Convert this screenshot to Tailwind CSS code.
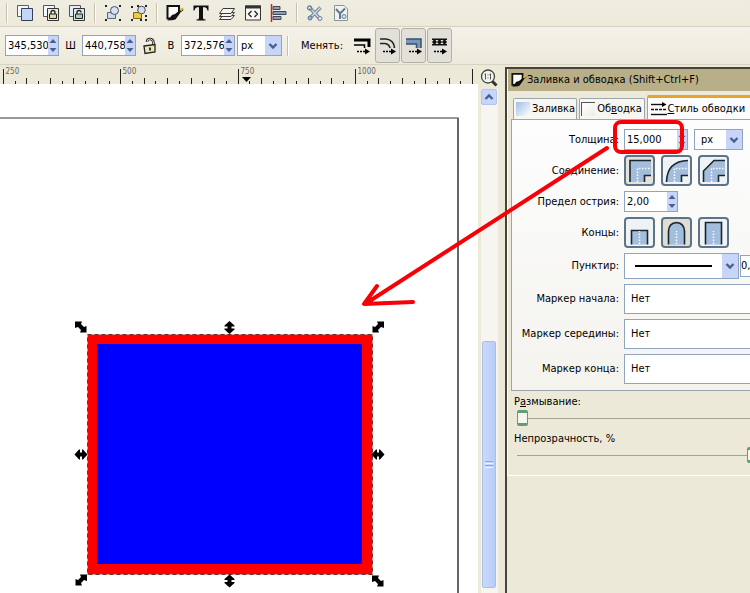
<!DOCTYPE html>
<html lang="ru">
<head>
<meta charset="utf-8">
<title>Заливка и обводка</title>
<script src="https://cdn.jsdelivr.net/npm/@tailwindcss/browser@4"></script>
</head>
<body class="relative flex h-screen flex-col overflow-hidden bg-[#ece9d8] font-['DejaVu_Sans_Condensed','DejaVu_Sans',sans-serif] text-[11px] leading-4 text-black">

<svg class="hidden">
  <symbol id="chev" viewBox="0 0 10 8"><path d="M1.5 2 5 5.5 8.5 2" fill="none" stroke="#46608f" stroke-width="2.4"/></symbol>
  <symbol id="up" viewBox="0 0 8 6"><path d="M0.5 5 4 1 7.5 5Z" fill="#46608f"/></symbol>
  <symbol id="down" viewBox="0 0 8 6"><path d="M0.5 1 4 5 7.5 1Z" fill="#46608f"/></symbol>
  <symbol id="pen" viewBox="0 0 18 18"><path d="M1.500 2H13V9L9 14.500H1.500Z" fill="#fbfaf6" stroke="#111" stroke-width="2"/><path d="M1.500 16.500 6 11 9 10 16.500 4 17.500 6 10 12 8 16Z" fill="#111"/><path d="M13.500 5.500 16 3.500 17.500 5 15 7.500Z" fill="#d9b63c"/></symbol>
</svg>

<header>
  <div class="flex h-[27px] items-center gap-2 border-b border-[#d5d1bf] bg-linear-to-b from-[#efede0] to-[#edeadb] pl-1.5">
    <div class="h-5 w-0.5 border-l border-[#c5c2ac] bg-white"></div>
    <button aria-label="Дублировать" class="size-[18px]"><svg viewBox="0 0 18 18"><path d="M1.500 1.500h11v11h-11z" fill="#f4f7fc" stroke="#555f72"/><path d="M5.500 4.500h11v12h-11z" fill="#c2d6f5" stroke="#34405a"/></svg></button>
    <button aria-label="Создать клон" class="size-[18px]"><svg viewBox="0 0 18 18"><path d="M1.500 1.500h11v11h-11z" fill="#f4f7fc" stroke="#555"/><path d="M5.500 4.500h11v12h-11z" fill="#eceade" stroke="#333"/><path d="M7.500 10h7v4.500h-7z" fill="#e9d79a" stroke="#222"/><path d="M9 10V8.500a2 2 0 0 1 4 0V10" fill="none" stroke="#222" stroke-width="1.300"/></svg></button>
    <button aria-label="Отсоединить клон" class="size-[18px]"><svg viewBox="0 0 18 18"><path d="M1.500 1.500h11v11h-11z" fill="#e2ecfb" stroke="#555"/><path d="M5.500 4.500h11v12h-11z" fill="#dce6ee" stroke="#333"/><path d="M7.500 10h7v4.500h-7z" fill="#a9cfb0" stroke="#222"/><path d="M9 10V8.500a2 2 0 0 1 4 0" fill="none" stroke="#222" stroke-width="1.300"/></svg></button>
    <div class="h-5 w-0.5 border-l border-[#c5c2ac] bg-white"></div>
    <button aria-label="Сгруппировать" class="size-[18px]"><svg viewBox="0 0 18 18"><path d="M1 1h2v2H1zM15 1h2v2h-2zM1 15h2v2H1zM15 15h2v2h-2z" fill="#222"/><path d="M3.500 8.500h8v6h-8z" fill="#c9daf2" stroke="#5b6472"/><circle cx="10.500" cy="6.500" r="4" fill="#d4e2f6" stroke="#46506a"/></svg></button>
    <button aria-label="Разгруппировать" class="size-[18px]"><svg viewBox="0 0 18 18"><path d="M1 2h2v2H1zM7 1h2v2H7zM15 1h2v2h-2zM1 15h2v2H1zM10 15h2v2h-2zM15 11h2v2h-2zM15 15h2v2h-2z" fill="#222"/><path d="M3.500 8.500h8v6h-8z" fill="#f0c846" stroke="#7d6418"/><circle cx="11.500" cy="6" r="3.800" fill="#d8dfe2" stroke="#46506a"/></svg></button>
    <div class="h-5 w-0.5 border-l border-[#c5c2ac] bg-white"></div>
    <button aria-label="Заливка и обводка" class="size-[18px]"><svg class="size-full"><use href="#pen"/></svg></button>
    <button aria-label="Текст и шрифт" class="size-[18px]"><svg viewBox="0 0 18 18"><path d="M1.500 1.500h15V6.500H15.500Q15 3.500 13 3.300H11V14Q11 15.500 13.500 15.500V16.500H4.500V15.500Q7 15.500 7 14V3.300H5Q3 3.500 2.500 6.500H1.500Z" fill="#111"/></svg></button>
    <button aria-label="Слои" class="size-[18px]"><svg viewBox="0 0 18 18"><g fill="#f6f5ef" stroke="#3c3c3c"><path d="M1.500 15.500 5 11.500H16.500L13 15.500Z"/><path d="M1.500 12.500 5 8.500H16.500L13 12.500Z"/><path d="M1.500 9.500 5 4.500H16.500L13 9.500Z"/></g></svg></button>
    <button aria-label="Редактор XML" class="size-[18px]"><svg viewBox="0 0 18 18"><path d="M1.500 2h15v14h-15z" fill="#f8f7f2" stroke="#333"/><path d="M1 1.500h16v3H1z" fill="#333"/><path d="M7.500 7 4.500 10 7.500 13M10.500 7l3 3-3 3" fill="none" stroke="#222" stroke-width="1.300"/></svg></button>
    <button aria-label="Выровнять" class="size-[18px]"><svg viewBox="0 0 18 18"><path d="M1.500 0v18" stroke="#e01818" stroke-width="1.500"/><g fill="#8b9db0" stroke="#3c4a5c"><path d="M3 2.500h7v3H3zM3 7.500h13v3H3zM3 12.500h8v3H3z"/></g></svg></button>
    <div class="h-5 w-0.5 border-l border-[#c5c2ac] bg-white"></div>
    <button aria-label="Настройки" class="size-[18px]"><svg viewBox="0 0 18 18"><path d="M4 4 14 15M14.500 3.500 4 14" stroke="#6f8299" stroke-width="3.400"/><path d="M4 4 14 15M14.500 3.500 4 14" stroke="#cfdbea" stroke-width="1.400"/><circle cx="3.500" cy="4" r="2" fill="none" stroke="#6f8299" stroke-width="1.300"/><circle cx="14" cy="14.500" r="2" fill="#dde5ec" stroke="#6f8299"/><circle cx="4" cy="14" r="2" fill="#a0b8d8" stroke="#5c7396"/></svg></button>
    <button aria-label="Свойства документа" class="size-[18px]"><svg viewBox="0 0 18 18"><path d="M2.500 1.500H12L15.500 5V16.500H2.500Z" fill="#f2f3f0" stroke="#8a9396"/><path d="M4 5 8 9.500 13 4.500M8 9v6" stroke="#60788e" stroke-width="2" fill="none"/><circle cx="12" cy="12.500" r="2" fill="#dfe7ea" stroke="#60788e"/></svg></button>
  </div>

  <div class="flex h-[38px] items-center border-b border-[#d8d4c4] bg-linear-to-b from-[#f4f2e9] to-[#edeadb] pl-[5px]">
    <div class="flex h-[21px] w-[54px] border border-[#8fa5bf] bg-white">
      <input aria-label="Y" value="345,530" class="w-0 flex-1 pl-0.5 outline-none">
      <div class="flex w-[10px] flex-col bg-[#c6d5f8]"><button aria-label="Больше" class="flex flex-1 items-center justify-center"><svg class="h-[6px] w-2"><use href="#up"/></svg></button><button aria-label="Меньше" class="flex flex-1 items-center justify-center"><svg class="h-[6px] w-2"><use href="#down"/></svg></button></div>
    </div>
    <label for="w" class="w-[23px] text-center">Ш</label>
    <div class="flex h-[21px] w-[54px] border border-[#8fa5bf] bg-white">
      <input id="w" value="440,758" class="w-0 flex-1 pl-0.5 outline-none">
      <div class="flex w-[10px] flex-col bg-[#c6d5f8]"><button aria-label="Больше" class="flex flex-1 items-center justify-center"><svg class="h-[6px] w-2"><use href="#up"/></svg></button><button aria-label="Меньше" class="flex flex-1 items-center justify-center"><svg class="h-[6px] w-2"><use href="#down"/></svg></button></div>
    </div>
    <button aria-label="Сохранять пропорции" class="ml-1.5 h-[18px] w-[15px]"><svg viewBox="0 0 15 18"><path d="M5 5Q5 1.500 8.500 2 11.500 2.500 11.500 6V8" fill="none" stroke="#222" stroke-width="2.600"/><path d="M5 5Q5 1.500 8.500 2 11.500 2.500 11.500 6V8" fill="none" stroke="#ddd8c0"/><path d="M2 9 13 7.500V15L3 16.500Z" fill="#efe6b4" stroke="#222" stroke-width="1.300"/><path d="M8 10.500V13.500" stroke="#222" stroke-width="1.800"/></svg></button>
    <label for="h" class="w-6 pl-1 text-center">В</label>
    <div class="flex h-[21px] w-[54px] border border-[#8fa5bf] bg-white">
      <input id="h" value="372,576" class="w-0 flex-1 pl-0.5 outline-none">
      <div class="flex w-[10px] flex-col bg-[#c6d5f8]"><button aria-label="Больше" class="flex flex-1 items-center justify-center"><svg class="h-[6px] w-2"><use href="#up"/></svg></button><button aria-label="Меньше" class="flex flex-1 items-center justify-center"><svg class="h-[6px] w-2"><use href="#down"/></svg></button></div>
    </div>
    <div class="relative ml-0.5 h-[21px] w-[45px]">
      <select aria-label="Единицы" class="size-full appearance-none border border-[#8fa5bf] bg-white pl-[3px] outline-none"><option>px</option></select>
      <div class="pointer-events-none absolute inset-y-px right-px flex w-4 items-center justify-center bg-[#c6d5f8]"><svg class="h-2 w-[10px]"><use href="#chev"/></svg></div>
    </div>
    <div class="ml-[5px] h-5 w-0.5 border-l border-[#c5c2ac] bg-white"></div>
    <span class="ml-3 w-[42px] whitespace-nowrap">Менять:</span>
    <button aria-label="Толщина обводки" class="ml-2.5 h-[18px] w-[20px]"><svg viewBox="0 0 20 18"><path d="M1 3H16V10" fill="none" stroke="#000" stroke-width="3"/><path d="M1 8H11.500V11" fill="none" stroke="#000" stroke-width="1.500"/><path d="M4 14.500h9" stroke="#000" stroke-width="1.500" stroke-dasharray="2 1"/><path d="M12 11.500 17 14.500 12 17.500Z"/></svg></button>
    <div class="ml-[2px] flex gap-px">
      <button aria-pressed="true" aria-label="Радиус углов" class="flex h-[35px] w-[25px] items-center justify-center rounded-[3px] border border-[#b3b0a4] bg-[#e2e0d8]"><svg class="h-[18px] w-5" viewBox="0 0 20 18"><path d="M2 2H8Q16 3 16.500 11" fill="none" stroke="#222" stroke-width="1.600"/><path d="M2 6.500H7Q11 7 12 11" fill="none" stroke="#222" stroke-width="1.600"/><path d="M5 14.500h9" stroke="#000" stroke-width="1.500" stroke-dasharray="2 1"/><path d="M13 11.500 18 14.500 13 17.500Z"/></svg></button>
      <button aria-pressed="true" aria-label="Градиенты" class="flex h-[35px] w-[25px] items-center justify-center rounded-[3px] border border-[#b3b0a4] bg-[#e2e0d8]"><svg class="h-[18px] w-5" viewBox="0 0 20 18"><path d="M2 2H17V11H13V7H2Z" fill="#7896b5"/><path d="M2 2H17V11M2 7H12.500V11" fill="none" stroke="#39516b" stroke-width="1.500"/><path d="M5 14.500h9" stroke="#000" stroke-width="1.500" stroke-dasharray="2 1"/><path d="M13 11.500 18 14.500 13 17.500Z"/></svg></button>
      <button aria-pressed="true" aria-label="Текстуры" class="flex h-[35px] w-[25px] items-center justify-center rounded-[3px] border border-[#b3b0a4] bg-[#e2e0d8]"><svg class="h-[18px] w-5" viewBox="0 0 20 18"><path d="M2 1.500H17V3H2ZM2 7H17V8.500H2Z" fill="#111"/><path d="M4.500 2 7 5 4.500 8 2 5ZM9.500 2 12 5 9.500 8 7 5ZM14.500 2 17 5 14.500 8 12 5Z" fill="#111"/><path d="M4 14.500h9" stroke="#000" stroke-width="1.500" stroke-dasharray="2 1"/><path d="M12 11.500 17 14.500 12 17.500Z"/></svg></button>
    </div>
  </div>
</header>

<main class="flex min-h-0 flex-1">
  <section class="flex min-w-0 flex-1 flex-col">
    <svg class="h-[19px] w-full shrink-0 bg-[#ece9d8]" id="ruler" font-size="8" fill="#666"></svg>
    <svg class="w-full flex-1 bg-white">
      <path d="M0 34H457" stroke="#999" stroke-width="2"/>
      <path d="M458 33.500V700" stroke="#666" stroke-width="2"/>
      <rect x="92" y="255" width="275" height="230" fill="#00f" stroke="#f00" stroke-width="10"/>
      <rect x="87.500" y="250.500" width="285" height="240" fill="none" stroke="#f99" />
      <rect x="87.500" y="250.500" width="285" height="240" fill="none" stroke="#633" stroke-dasharray="4 3"/>
      <defs>
        <path id="v" d="M0-6.500 5-2V-1H2V1H5V2L0 6.500-5 2V1H-2V-1H-5V-2Z"/>
        <path id="d" d="M-6-5.500H1L0-3 3 0 5.500-1V5.500H-1L0 3-3 0-6 1Z"/>
      </defs>
      <use href="#d" x="81" y="243"/><use href="#d" x="378" y="497"/>
      <use href="#d" transform="translate(378 243) scale(-1 1)"/><use href="#d" transform="translate(81 496) scale(-1 1)"/>
      <use href="#v" x="229.500" y="243.500"/><use href="#v" x="229.500" y="497"/>
      <use href="#v" transform="translate(81 370.500) rotate(90)"/><use href="#v" transform="translate(378 370.500) rotate(90)"/>
    </svg>
  </section>

  <div class="flex w-[27px] flex-col items-center pr-[7px] pl-0.5">
    <button aria-label="Масштаб 1:1" class="mt-1 size-[18px] shrink-0"><svg viewBox="0 0 18 18"><path d="M12 12 16.500 16.500" stroke="#333" stroke-width="3"/><circle cx="8" cy="7.500" r="6.500" fill="#f3f3ee" stroke="#444" stroke-width="1.300"/><path d="M5.500 4.500v6M10.500 4.500v6M4.500 5.500h1M9.500 5.500h1M8 5.500v1M8 8.500v1" stroke="#555"/></svg></button>
    <div class="mt-0.5 flex w-[17px] flex-1 flex-col items-center bg-[#f6f5ef]">
      <button aria-label="Вверх" class="flex size-4 items-center justify-center rounded-xs border border-[#b3c5ee] bg-[#c6d5fb]"><svg class="h-2 w-[10px] rotate-180"><use href="#chev"/></svg></button>
      <div class="flex-[237]"></div>
      <div class="flex w-[14px] flex-[246] flex-col items-center justify-center gap-px rounded-xs border border-[#a9bfe8] bg-linear-to-r from-[#cbdafc] to-[#b9ccf8]">
        <i class="h-px w-2 bg-[#93aae0]"></i><i class="h-px w-2 bg-[#eef3ff]"></i><i class="h-px w-2 bg-[#93aae0]"></i><i class="h-px w-2 bg-[#eef3ff]"></i>
      </div>
      <div class="h-[5px]"></div>
    </div>
  </div>

  <aside class="mt-0.5 w-[245px] shrink-0 overflow-hidden border-t-2 border-l-2 border-[#45433a]">
   <div class="w-[251px]">
    <div class="border-b border-l border-white pb-[12px]">
      <h1 class="flex h-[22px] items-center bg-[#b8af89] pl-[3px] whitespace-nowrap"><svg class="size-4"><use href="#pen"/></svg>Заливка и обводка (Shift+Ctrl+F)</h1>
      <div role="tablist" class="flex items-end gap-0.5 pt-1 pl-[5px]">
        <button role="tab" class="flex h-[21px] w-[65px] items-center gap-0.5 rounded-t-xs border border-b-0 border-[#9ba5ab] bg-[#f7f6f0] pl-0.5"><i class="size-[14px] shrink-0 bg-linear-to-br from-[#9fbfe6] to-white"></i>Заливка</button>
        <button role="tab" class="flex h-[21px] w-[67px] items-center gap-0.5 rounded-t-xs border border-b-0 border-[#9ba5ab] bg-[#f7f6f0] pl-px"><i class="size-[14px] shrink-0 border-t border-l border-[#555] bg-linear-to-br from-white to-[#eeece4]"></i><span>Об<u>в</u>одка</span></button>
        <button role="tab" aria-selected="true" class="flex h-[24px] w-[112px] items-center rounded-t-xs border-t-3 border-l border-[#e5a52d] border-l-[#9ba5ab] bg-[#fcfcfe] pl-[3px] whitespace-nowrap"><svg class="size-4 shrink-0" viewBox="0 0 16 16"><path d="M0 3.500H11" stroke="#111" stroke-width="1.400"/><path d="M11 1 15.500 3.500 11 6Z"/><path d="M0 8.500H16" stroke="#111" stroke-dasharray="3 1" stroke-width="1.400"/><path d="M0 13.500H16" stroke="#111" stroke-width="1.400"/></svg><span><u>С</u>тиль обводки</span></button>
      </div>
      <div class="ml-[3px] grid grid-cols-[107px_auto] items-center gap-x-[5px] gap-y-[5px] border border-[#9ba5ab] bg-linear-to-b from-[#fdfdfe] to-[#f4f3ee] pt-[9px] pb-1.5 whitespace-nowrap">
        <label for="thick" class="text-right">Толщина:</label>
        <div class="flex">
          <div class="flex h-[21px] w-[64px] border border-[#8fa5bf] bg-white"><input id="thick" value="15,000" class="w-0 flex-1 pl-0.5 outline-none"><div class="flex w-[10px] flex-col bg-[#c6d5f8]"><button aria-label="Больше" class="flex flex-1 items-center justify-center"><svg class="h-[6px] w-2"><use href="#up"/></svg></button><button aria-label="Меньше" class="flex flex-1 items-center justify-center"><svg class="h-[6px] w-2"><use href="#down"/></svg></button></div></div>
          <div class="relative ml-1.5 h-[21px] w-[49px]"><select aria-label="Единицы толщины" class="size-full appearance-none border border-[#8fa5bf] bg-white pl-[6px] outline-none"><option>px</option></select><div class="pointer-events-none absolute inset-y-px right-px flex w-4 items-center justify-center bg-[#c6d5f8]"><svg class="h-2 w-[10px]"><use href="#chev"/></svg></div></div>
        </div>
        <span class="text-right">Соединение:</span>
        <div class="flex gap-1.5">
          <button aria-label="Острое" aria-pressed="true" class="size-[31px] rounded-[4px] border-2 border-[#5d7488] bg-[#e4e2da]"><svg class="size-full" viewBox="0 0 27 27"><path d="M4 3.500H25V18H18.500V25H4Z" fill="#a3bddd"/><path d="M4 25V3.500H25M18.500 25V18.500H25" fill="none" stroke="#1a2630" stroke-width="1.600"/><path d="M11.500 25V11.500H25" fill="none" stroke="#fff" stroke-width="1.500" stroke-dasharray="1.500 1.500"/></svg></button>
          <button aria-label="Скруглённое" class="size-[31px] rounded-[4px] border-2 border-[#5d7488] bg-[#eff3f5]"><svg class="size-full" viewBox="0 0 27 27"><path d="M3.500 25Q4 4 25 3.500V18H18.500V25Z" fill="#a3bddd"/><path d="M3.500 25Q4 4 25 3.500M18.500 25V18.500H25" fill="none" stroke="#1a2630" stroke-width="1.600"/><path d="M11.500 25V11.500H25" fill="none" stroke="#fff" stroke-width="1.500" stroke-dasharray="1.500 1.500"/></svg></button>
          <button aria-label="Фаска" class="size-[31px] rounded-[4px] border-2 border-[#5d7488] bg-[#eff3f5]"><svg class="size-full" viewBox="0 0 27 27"><path d="M3.500 25V14L14 3.500H25V18H18.500V25Z" fill="#a3bddd"/><path d="M3.500 25V14L14 3.500H25M18.500 25V18.500H25" fill="none" stroke="#1a2630" stroke-width="1.600"/><path d="M11.500 25V11.500H25" fill="none" stroke="#fff" stroke-width="1.500" stroke-dasharray="1.500 1.500"/></svg></button>
        </div>
        <label for="limit" class="text-right">Предел острия:</label>
        <div class="flex h-[21px] w-[54px] border border-[#8fa5bf] bg-white"><input id="limit" value="2,00" class="w-0 flex-1 pl-0.5 outline-none"><div class="flex w-[10px] flex-col bg-[#c6d5f8]"><button aria-label="Больше" class="flex flex-1 items-center justify-center"><svg class="h-[6px] w-2"><use href="#up"/></svg></button><button aria-label="Меньше" class="flex flex-1 items-center justify-center"><svg class="h-[6px] w-2"><use href="#down"/></svg></button></div></div>
        <span class="text-right">Концы:</span>
        <div class="flex gap-1.5">
          <button aria-label="Плоские" class="size-[31px] rounded-[4px] border-2 border-[#5d7488] bg-[#eff3f5]"><svg class="size-full" viewBox="0 0 27 27"><path d="M5.500 25.500V11.500H21.500V25.500" fill="#a3bddd" stroke="#1a2630" stroke-width="1.600"/><path d="M13.500 25V12" stroke="#fff" stroke-width="1.500" stroke-dasharray="1.500 1.500"/></svg></button>
          <button aria-label="Круглые" aria-pressed="true" class="size-[31px] rounded-[4px] border-2 border-[#5d7488] bg-[#e0ddd3]"><svg class="size-full" viewBox="0 0 27 27"><path d="M5.500 25.500V12Q6 4 13.500 3.500 21 4 21.500 12V25.500" fill="#a3bddd" stroke="#1a2630" stroke-width="1.600"/><path d="M13.500 25V12" stroke="#fff" stroke-width="1.500" stroke-dasharray="1.500 1.500"/></svg></button>
          <button aria-label="Квадратные" class="size-[31px] rounded-[4px] border-2 border-[#5d7488] bg-[#eff3f5]"><svg class="size-full" viewBox="0 0 27 27"><path d="M5.500 25.500V3.500H21.500V25.500" fill="#a3bddd" stroke="#1a2630" stroke-width="1.600"/><path d="M13.500 25V12" stroke="#fff" stroke-width="1.500" stroke-dasharray="1.500 1.500"/></svg></button>
        </div>
        <label for="dash" class="text-right">Пунктир:</label>
        <div class="flex gap-px">
          <div class="relative h-[26px] w-[115px] shrink-0"><select id="dash" class="size-full appearance-none border border-[#8fa5bf] bg-white outline-none"><option></option></select><div class="pointer-events-none absolute inset-y-px right-px left-[11px] flex items-center gap-2.5"><i class="h-0.5 flex-1 bg-black"></i><div class="flex h-full w-4 items-center justify-center bg-[#c6d5f8]"><svg class="h-2 w-[10px]"><use href="#chev"/></svg></div></div></div>
          <input aria-label="Смещение" value="0," class="my-0.5 w-0 flex-1 border border-[#8fa5bf] bg-white outline-none">
        </div>
        <label for="m1" class="text-right">Маркер начала:</label>
        <select id="m1" class="h-[30px] appearance-none border border-[#8fa5bf] bg-white pl-[6px] outline-none"><option>Нет</option></select>
        <label for="m2" class="text-right">Маркер середины:</label>
        <select id="m2" class="h-[30px] appearance-none border border-[#8fa5bf] bg-white pl-[6px] outline-none"><option>Нет</option></select>
        <label for="m3" class="text-right">Маркер конца:</label>
        <select id="m3" class="h-[30px] appearance-none border border-[#8fa5bf] bg-white pl-[6px] outline-none"><option>Нет</option></select>
      </div>
      <div class="flex flex-col pt-[3px] pl-1.5">
        <label for="blur">Р<u>а</u>змывание:</label>
        <input id="blur" type="range" min="0" max="100" value="0" class="ml-[3px] h-4 appearance-none bg-transparent bg-linear-to-r from-[#a5a294] to-[#a5a294] bg-[length:100%_1px] bg-center bg-no-repeat [&::-webkit-slider-thumb]:h-4 [&::-webkit-slider-thumb]:w-[11px] [&::-webkit-slider-thumb]:appearance-none [&::-webkit-slider-thumb]:rounded-[2px] [&::-webkit-slider-thumb]:border [&::-webkit-slider-thumb]:border-y-3 [&::-webkit-slider-thumb]:border-[#5f9f72] [&::-webkit-slider-thumb]:bg-[#f5f5f0]">
        <label for="opacity" class="mt-[5px]">Непрозрачность, %</label>
        <input id="opacity" type="range" min="0" max="100" value="100" class="ml-[3px] h-4 appearance-none bg-transparent bg-linear-to-r from-[#a5a294] to-[#a5a294] bg-[length:100%_1px] bg-center bg-no-repeat [&::-webkit-slider-thumb]:h-4 [&::-webkit-slider-thumb]:w-[11px] [&::-webkit-slider-thumb]:appearance-none [&::-webkit-slider-thumb]:rounded-[2px] [&::-webkit-slider-thumb]:border [&::-webkit-slider-thumb]:border-y-3 [&::-webkit-slider-thumb]:border-[#5f9f72] [&::-webkit-slider-thumb]:bg-[#f5f5f0]">
      </div>
    </div>
   </div>
  </aside>
</main>

<svg class="pointer-events-none absolute top-0 right-0 h-[320px] w-[400px]" viewBox="350 0 400 320" fill="none" stroke="#f80008" stroke-width="4" stroke-linecap="round" stroke-linejoin="round">
  <rect x="615" y="122" width="67" height="30" rx="6"/>
  <path d="M607 148 365 304M377 286 364 304 413 302"/>
</svg>

<script>
  const ruler = document.getElementById('ruler');
  let marks = '';
  for (let i = 0; i <= 40; i++) {
    const x = Math.round(3 + i * 11.73) + 0.5;
    const h = i % 10 === 0 ? 15 : i % 2 === 0 ? 6 : 3;
    marks += `<path d="M${x} 19v-${h}" stroke="#222"/>`;
    if (i % 10 === 0 && i < 40) marks += `<text x="${x + 2}" y="9">${250 + i * 25}</text>`;
  }
  ruler.innerHTML = marks + '<path d="M242 12h9l-4.500 5z" fill="#000"/>';
</script>
</body>
</html>
